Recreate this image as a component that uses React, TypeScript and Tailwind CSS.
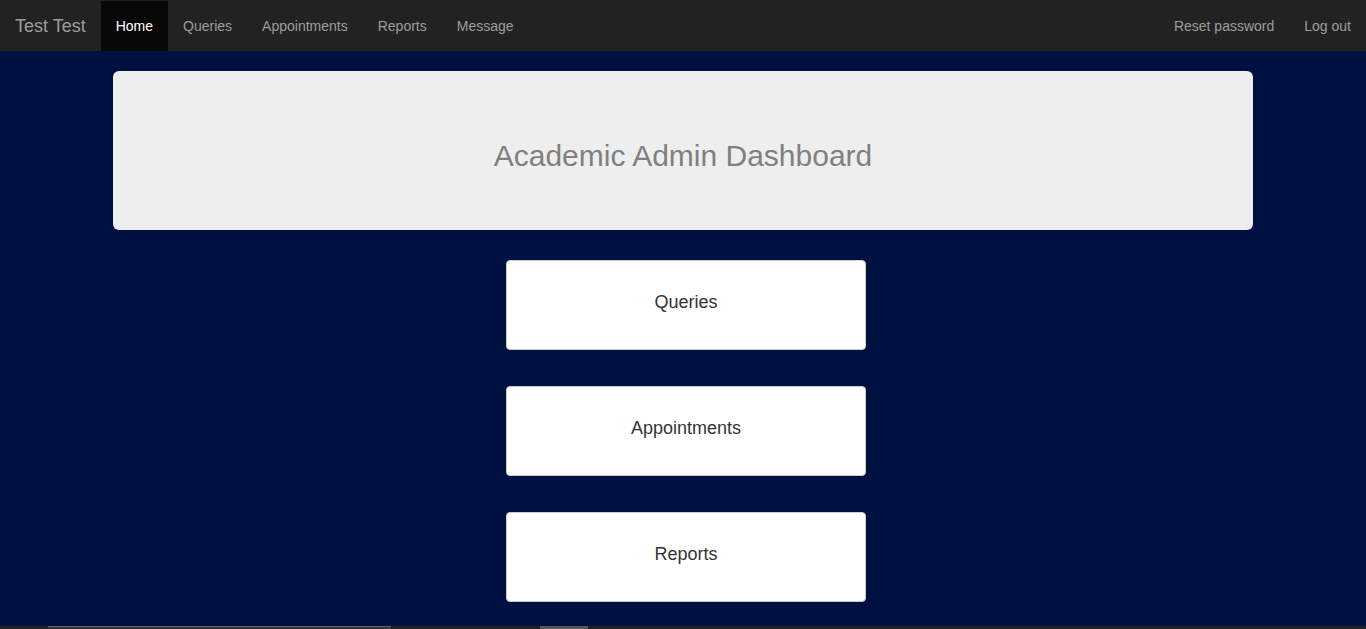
import React from "react";

export default function App() {
  const left = ["Queries", "Appointments", "Reports", "Message"];
  const cards = ["Queries", "Appointments", "Reports"];
  return (
    <div
      className="min-h-[629px] bg-[#001141] flex flex-col"
      style={{ fontFamily: '"Liberation Sans", Arial, sans-serif' }}
    >
      <nav className="h-[51px] bg-[#222222] pt-px flex items-start justify-between">
        <div className="flex items-start">
          <span className="h-[50px] px-[15px] flex items-center text-[18px] text-[#9d9d9d]">Test Test</span>
          <span className="h-[50px] px-[15px] flex items-center text-[14px] text-white bg-[#080808]">Home</span>
          {left.map((l) => (
            <span key={l} className="h-[50px] px-[15px] flex items-center text-[14px] text-[#9d9d9d]">
              {l}
            </span>
          ))}
        </div>
        <div className="flex items-start">
          <span className="h-[50px] px-[15px] flex items-center text-[14px] text-[#9d9d9d]">Reset password</span>
          <span className="h-[50px] px-[15px] flex items-center text-[14px] text-[#9d9d9d]">Log out</span>
        </div>
      </nav>
      <main className="flex-1 flex flex-col items-center pt-[20px]">
        <div className="w-[1140px] h-[159px] bg-[#eeeeee] rounded-[6px] flex items-start justify-center pt-[68px]">
          <h2 className="text-[30px] leading-[33px] text-[#808080]">Academic Admin Dashboard</h2>
        </div>
        <div className="flex flex-col gap-[36px] mt-[30px] ml-[6px]">
          {cards.map((c) => (
            <div
              key={c}
              className="w-[360px] h-[90px] bg-white border border-[#cccccc] rounded-[4px] flex justify-center pt-[29px]"
            >
              <span className="text-[18px] leading-[24px] text-[#333333]">{c}</span>
            </div>
          ))}
        </div>
      </main>
      <div className="h-[3px] bg-[#222222] relative mt-[21px]">
        <div className="absolute left-[48px] w-[343px] top-0 h-[3px] bg-[#333333] border-t border-[#666666]" />
        <div className="absolute left-[540px] w-[48px] top-0 h-[3px] bg-[#555555]" />
      </div>
    </div>
  );
}
